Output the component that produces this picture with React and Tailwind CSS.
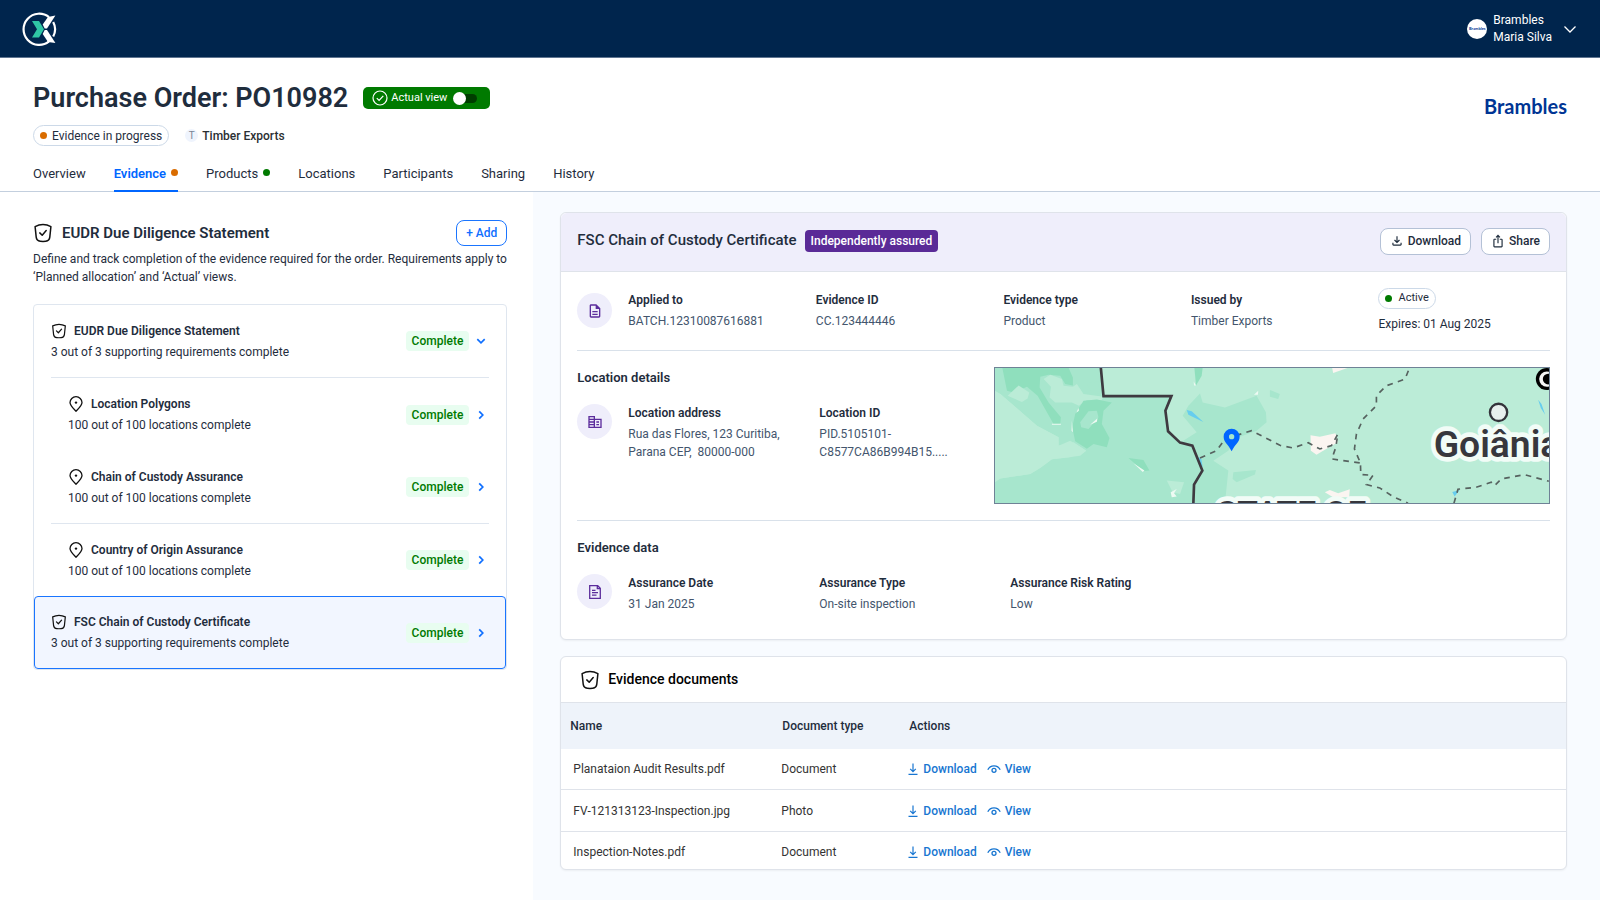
import React from 'react';
import { MdOutlineDescription, MdOutlineCorporateFare, MdOutlineFileDownload, MdOutlineIosShare } from 'react-icons/md';

const tabs = [
	{ name: 'Overview' },
	{ name: 'Evidence', dot: 'bg-[#d96c00]', active: true },
	{ name: 'Products', dot: 'bg-[#007a00]' },
	{ name: 'Locations' },
	{ name: 'Participants' },
	{ name: 'Sharing' },
	{ name: 'History' },
];

const requirements = [
	{ name: 'EUDR Due Diligence Statement', text: '3 out of 3 supporting requirements complete', open: true, line: true },
	{ name: 'Location Polygons', text: '100 out of 100 locations complete', nested: true },
	{ name: 'Chain of Custody Assurance', text: '100 out of 100 locations complete', nested: true, line: true },
	{ name: 'Country of Origin Assurance', text: '100 out of 100 locations complete', nested: true, line: true },
	{ name: 'FSC Chain of Custody Certificate', text: '3 out of 3 supporting requirements complete', selected: true },
];

const documents = [
	{ name: 'Planataion Audit Results.pdf', type: 'Document' },
	{ name: 'FV-121313123-Inspection.jpg', type: 'Photo' },
	{ name: 'Inspection-Notes.pdf', type: 'Document' },
];

function ShieldIcon({ className }) {
	return (
		<svg className={className} viewBox="0 0 20 20" fill="none" stroke="#111" strokeWidth="1.5" strokeLinecap="round" strokeLinejoin="round">
			<path d="M2.1 3.6C4.700 2.200 7.300 1.600 10 1.600s5.300.6 7.900 2l-1.100 10.600c-.3 2.500-1.600 3.800-4 4.100-1.900.2-3.700.2-5.600 0-2.400-.3-3.700-1.600-4-4.100z" />
			<path d="M6.800 9.900l2.400 2.300 4-4.600" />
		</svg>
	);
}

function PinIcon({ className }) {
	return (
		<svg className={className} viewBox="0 0 16 16" fill="none" stroke="#111" strokeWidth="1.3" strokeLinejoin="round">
			<path d="M8 15.2C5 12.2 2 9.6 2 6.6a6 5.9 0 0 1 12 0c0 3-3 5.600-6 8.600z" />
			<circle cx="8" cy="6.600" r="1.200" fill="#111" stroke="none" />
		</svg>
	);
}

function Chevron({ open }) {
	return (
		<svg className="size-4 shrink-0" viewBox="0 0 16 16" fill="none" stroke="#0f6fff" strokeWidth="1.700">
			<path d={open ? 'M4.300 6.200L8 9.800l3.700-3.600' : 'M6.200 4.300L9.800 8l-3.600 3.700'} />
		</svg>
	);
}

function Field({ label, children }) {
	return (
		<div>
			<dt className="font-semibold leading-[18px]">{label}</dt>
			<dd className="mt-[3px] leading-[18px] text-[#43556d]">{children}</dd>
		</div>
	);
}

function RoundIcon({ children }) {
	return (
		<div className="flex size-[35px] shrink-0 items-center justify-center rounded-full bg-[#efeefb] text-[#5c2d9c]">
			{children}
		</div>
	);
}

function Header() {
	return (
		<header className="flex h-[58px] items-center justify-between border-b border-[#5f7591] bg-[#00254d] pr-[23px] pl-[22px] text-white">
			<a href="#" aria-label="Home">
				<svg className="size-9" viewBox="0 0 36 36">
					<path d="M27 6.200A15.600 15.600 0 1 0 27 30.400M31.200 11a15.600 15.600 0 0 1 0 14.600" fill="none" stroke="#fff" strokeWidth="2.200" />
					<path d="M10 10h7l5 8.300-5 8.300h-7l5-8.300z" fill="#2fc6a5" />
					<path d="M20.700 13.500L26 6l7.400-1.500-8.400 13h-2.300z" fill="#fff" />
					<path d="M20.700 23.100L26 31l7.400 1-8.400-12.900h-2.300z" fill="#fff" />
				</svg>
			</a>
			<button className="flex items-center text-left text-xs">
				<span className="flex size-5 items-center justify-center rounded-full bg-white font-[Lato,sans-serif] text-[4px] font-bold text-[#003594]">
					Brambles
				</span>
				<span className="ml-[6px] leading-[17px]">
					Brambles
					<br />
					Maria Silva
				</span>
				<svg className="ml-[11px] h-4 w-[14px]" viewBox="0 0 14 16" fill="none" stroke="#fff" strokeWidth="1.300">
					<path d="M1.500 5.500L7 11l5.500-5.500" />
				</svg>
			</button>
		</header>
	);
}

function OrderHeader() {
	return (
		<div className="border-b border-[#c3cfde] px-[33px] pt-6">
			<div className="flex items-start justify-between">
				<div>
					<div className="flex items-center">
						<h1 className="text-[27px] leading-8 font-semibold">Purchase Order: PO10982</h1>
						<label className="ml-[15px] flex h-[22px] items-center rounded-[5px] bg-[#007a00] pr-[13px] pl-[9px] text-[11px] text-white">
							<svg className="size-4" viewBox="0 0 16 16" fill="none" stroke="#fff" strokeWidth="1.200">
								<circle cx="8" cy="8" r="7" />
								<path d="M4.800 8.200l2.300 2.300 4.200-4.700" />
							</svg>
							<span className="mr-[6px] ml-[3px]">Actual view</span>
							<input
								type="checkbox"
								role="switch"
								className="relative h-[9px] w-6 appearance-none rounded-full bg-[#003d00] before:absolute before:-top-[2px] before:left-0 before:size-[13px] before:rounded-full before:bg-white"
							/>
						</label>
					</div>
					<div className="mt-[11px] flex items-center text-xs">
						<span className="flex h-[21px] items-center gap-[5px] rounded-full border border-[#ccd9e8] px-[6px]">
							<span className="size-[7px] rounded-full bg-[#d96c00]" />
							Evidence in progress
						</span>
						<span className="ml-4 flex size-[13px] items-center justify-center rounded-full bg-[#eff4fd] text-[10px] text-[#7a8494]">T</span>
						<span className="ml-1 font-medium text-[#2b2f33]">Timber Exports</span>
					</div>
				</div>
				<div className="mt-2 font-[Lato,sans-serif] text-[20px] leading-8 font-bold text-[#003594]">Brambles</div>
			</div>
			<nav className="mt-[18px] -mb-px flex gap-7 text-[13px] leading-5">
				{tabs.map((tab) => (
					<a
						key={tab.name}
						href="#"
						className={
							tab.active
								? 'flex h-7 items-start gap-[5px] border-b-2 border-[#0066ff] font-semibold text-[#0066ff]'
								: 'flex h-7 items-start gap-[5px]'
						}
					>
						{tab.name}
						{tab.dot && <span className={`mt-[5px] size-[7px] rounded-full ${tab.dot}`} />}
					</a>
				))}
			</nav>
		</div>
	);
}

function Requirements() {
	return (
		<section className="w-1/3 shrink-0 pt-7 pr-[26px] pl-[33px]">
			<div className="flex items-center">
				<ShieldIcon className="size-5" />
				<h2 className="ml-[9px] text-[15px] font-semibold">EUDR Due Diligence Statement</h2>
				<button className="ml-auto h-[26px] rounded-lg border border-[#1a75ff] px-[9px] text-xs font-medium text-[#0f6fff]">+ Add</button>
			</div>
			<p className="mt-1 text-xs leading-[18px]">
				Define and track completion of the evidence required for the order. Requirements apply to ‘Planned allocation’ and ‘Actual’ views.
			</p>
			<ul className="mt-[18px] rounded border border-[#dfe6ef]">
				{requirements.map((item) => (
					<li key={item.name} className={item.selected ? '-mt-px rounded border border-[#1a75ff] bg-[#f2f6ff] px-4' : 'px-[17px]'}>
						<button
							className={`flex w-full items-center text-left text-xs leading-[18px] ${item.selected ? 'h-[71px]' : 'h-[73px]'} ${item.line ? 'border-b border-[#dfe6ef]' : ''} ${item.nested ? 'pl-[17px]' : ''}`}
						>
							<span className="flex-1">
								<span className="flex items-center gap-[7px] font-semibold">
									{item.nested ? <PinIcon className="size-4" /> : <ShieldIcon className="size-4" />}
									{item.name}
								</span>
								<span className="mt-[3px] block">{item.text}</span>
							</span>
							<span className="mr-1 rounded bg-[#e8fdf0] px-[6px] py-px font-medium text-[#007a00]">Complete</span>
							<Chevron open={item.open} />
						</button>
					</li>
				))}
			</ul>
		</section>
	);
}

function LocationMap() {
	return (
		<svg
			className="h-[137px] w-4/7 shrink-0 border border-[#6f8296] bg-[#bbecd7]"
			viewBox="44 51 1664 407"
			preserveAspectRatio="xMidYMid slice"
			role="img"
			aria-label="Map of the location"
		>
			{/* land cover */}
			<path
				d="M44 51H362L370 138H575L556 180L564 242L600 276L650 245L608 195L625 165L660 128L668 155L735 170L830 135L858 185L860 215L830 240L770 262L745 300L700 330L745 360L735 458H44V390L60 384L110 376L150 370L190 345L215 326L270 320L300 310L318 300L280 275L235 285V260L170 225L60 130L44 120Z"
				fill="#a7e6cd"
			/>
			<path d="M44 125L60 130L170 225L235 260V285L270 270L318 300L300 315L215 326L180 352L150 370L60 384L44 395Z" fill="#bbecd7" />
			<path d="M66 51H265L278 80V104L255 100L240 75L205 72L180 78L178 110L205 155L242 200L240 220H220L172 135L140 108L100 125L80 120Z" fill="#8fdfbd" />
			<path d="M190 85L210 72L245 85L250 105L278 108L290 100L310 130L370 138L365 148L320 148L296 165L275 155H225L208 140L212 108Z" fill="#bbecd7" />
			<path d="M318 97L355 92L358 128L335 126Z" fill="#a7e6cd" />
			<path d="M82 135L115 104L147 125L142 143L125 154Z" fill="#bbecd7" />
			<path d="M285 190L310 150L350 146L395 155L370 180L365 220L388 262L380 290L340 280L320 294L285 272L276 230Z" fill="#8fdfbd" />
			<path d="M300 215L325 182L350 180L355 200L325 235L303 230Z" fill="#a7e6cd" />
			<path d="M445 322L490 328L508 360L490 362Z" fill="#8fdfbd" />
			<path d="M643 51H668L665 75L648 104Z" fill="#8fdfbd" />
			<path d="M760 365L828 358L825 372L770 395L758 385Z" fill="#a7e6cd" />
			<path d="M870 118L900 130L895 145L870 138Z" fill="#a7e6cd" />
			<path d="M560 390L612 395L600 430L578 425Z" fill="#bbecd7" />
			<path d="M572 425L590 415L582 428L590 438L575 440ZM215 219H242V222H215ZM330 222L352 203L350 213ZM460 338L493 360L488 364ZM822 132L835 120L834 132ZM288 186L295 172L296 180ZM275 210L278 245L274 240ZM641 92L648 104L642 104Z" fill="#eefaf3" />
			{/* towns */}
			<path d="M992 254L1020 258L1067 248L1074 275L1030 300L1010 312L993 300ZM1035 425L1050 418L1075 428L1110 416L1108 440L1060 440ZM1057 51H1105L1060 67Z" fill="#fbf5f1" />
			{/* water */}
			<path d="M620 178L635 182L670 214L625 192ZM652 318L664 325L668 350L660 342ZM1676 147L1686 160L1697 192L1684 172ZM1418 424L1440 418L1425 438Z" fill="#66cdee" />
			{/* borders */}
			<path d="M362 51L370 136H574L556 180L564 242L600 276L637 285L667 360L642 402L640 458" fill="none" stroke="#3e3a40" strokeWidth="8" />
			<g fill="none" stroke="#56625f" strokeWidth="5" strokeDasharray="17 16">
				<path d="M660 322L710 300L735 265L815 240L900 284L940 292L985 276L1020 295L1055 285L1074 250L1068 290L1056 325L1142 337" />
				<path d="M1286 60L1276 85L1220 105L1190 135V165L1150 205L1130 250L1124 295L1142 337L1143 372L1180 374L1160 402L1200 412L1240 438L1285 458" />
				<path d="M1423 458L1435 416L1490 410L1535 395L1545 405L1565 385L1635 372L1708 392" />
			</g>
			{/* cities */}
			<circle cx="1557" cy="185" r="26" fill="#e8f0ee" stroke="#33333a" strokeWidth="7" />
			<circle cx="1702" cy="85" r="33" fill="#000" />
			<circle cx="1702" cy="85" r="23" fill="#f5f5f5" />
			<circle cx="1706" cy="85" r="16" fill="#000" />
			<g
				className="font-[Roboto,sans-serif] font-semibold"
				fill="#37373d"
				stroke="#f2fcf7"
				strokeWidth="28"
				strokeLinejoin="round"
				paintOrder="stroke"
			>
				<text x="1362" y="320" fontSize="112">Goiânia</text>
				<text x="710" y="522" fontSize="101">STATE OF</text>
			</g>
			<path d="M755 302C745 280 731 275 731 258a24 24 0 0 1 48 0C779 275 765 280 755 302Z" fill="#0066ff" />
			<circle cx="755" cy="258" r="8" fill="#a7e6cd" />
		</svg>
	);
}

function Certificate() {
	return (
		<article className="rounded-md border border-[#dfe3ea] bg-white text-xs shadow-xs">
			<div className="flex h-[59px] items-center rounded-t-md border-b border-[#dfe3ea] bg-[#efeefb] px-4 pb-[2px]">
				<h2 className="text-[15px] font-medium">FSC Chain of Custody Certificate</h2>
				<span className="ml-2 rounded bg-[#5a2a97] px-[6px] py-[2px] leading-[18px] font-medium text-white">Independently assured</span>
				<button className="ml-auto flex h-[27px] items-center gap-1 rounded-lg border border-[#b4c1d6] bg-white px-[9px] font-medium">
					<MdOutlineFileDownload className="size-[14px]" />
					Download
				</button>
				<button className="ml-[10px] flex h-[27px] items-center gap-1 rounded-lg border border-[#b4c1d6] bg-white px-[9px] font-medium">
					<MdOutlineIosShare className="size-[14px]" />
					Share
				</button>
			</div>
			<div className="px-4">
				<div className="flex items-center gap-4 border-b border-[#d9e1ea] pt-4 pb-[17px]">
					<RoundIcon>
						<MdOutlineDescription className="size-4" />
					</RoundIcon>
					<dl className="grid flex-1 grid-cols-5 items-center gap-4">
						<Field label="Applied to">BATCH.12310087616881</Field>
						<Field label="Evidence ID">CC.123444446</Field>
						<Field label="Evidence type">Product</Field>
						<Field label="Issued by">Timber Exports</Field>
						<div>
							<dt className="flex h-[21px] w-fit items-center gap-[6px] rounded-full border border-[#ccd9e8] px-[6px] text-[11px]">
								<span className="size-[7px] rounded-full bg-[#007a00]" />
								Active
							</dt>
							<dd className="mt-[6px] leading-[18px]">Expires: 01 Aug 2025</dd>
						</div>
					</dl>
				</div>
				<div className="flex border-b border-[#d9e1ea] py-4">
					<div className="flex-1">
						<h3 className="text-[13px] leading-[22px] font-semibold">Location details</h3>
						<div className="mt-[15px] flex gap-4">
							<RoundIcon>
								<MdOutlineCorporateFare className="size-4" />
							</RoundIcon>
							<dl className="grid flex-1 grid-cols-[191px_1fr]">
								<Field label="Location address">
									Rua das Flores, 123 Curitiba,
									<br />
									Parana CEP,&nbsp; 80000-000
								</Field>
								<Field label="Location ID">
									PID.5105101-
									<br />
									C8577CA86B994B15.....
								</Field>
							</dl>
						</div>
					</div>
					<LocationMap />
				</div>
				<div className="pt-4 pb-[26px]">
					<h3 className="text-[13px] leading-[22px] font-semibold">Evidence data</h3>
					<div className="mt-[15px] flex gap-4">
						<RoundIcon>
							<svg className="size-4" viewBox="0 0 16 16" fill="none" stroke="currentColor" strokeWidth="1.300">
								<path d="M2.700 1.700h8l2.600 2.600v10H2.700zM10.300 1.700v3h3M5 6.300h3.500M5 8.700h6M5 11.200h4.500" />
							</svg>
						</RoundIcon>
						<dl className="grid grid-cols-[191px_191px_191px]">
							<Field label="Assurance Date">31 Jan 2025</Field>
							<Field label="Assurance Type">On-site inspection</Field>
							<Field label="Assurance Risk Rating">Low</Field>
						</dl>
					</div>
				</div>
			</div>
		</article>
	);
}

function Documents() {
	return (
		<section className="mt-4 overflow-hidden rounded-md border border-[#dfe3ea] bg-white text-xs shadow-xs">
			<div className="flex h-[45px] items-center gap-2 pl-[19px] text-black">
				<ShieldIcon className="size-5" />
				<h2 className="text-[14px] font-medium">Evidence documents</h2>
			</div>
			<table className="w-full table-fixed text-left">
				<thead className="border-t border-[#dfe3ea] bg-[#eef3fa]">
					<tr className="h-[46px]">
						<th className="w-[211px] pl-[9px] font-medium">Name</th>
						<th className="w-[127px] pl-[10px] font-medium">Document type</th>
						<th className="pl-[10px] font-medium">Actions</th>
					</tr>
				</thead>
				<tbody className="divide-y divide-[#dfe3ea] text-[#333]">
					{documents.map((document) => (
						<tr key={document.name} className="h-[42px] first:h-[41px] last:h-[37px] last:*:pt-1">
							<td className="pl-3">{document.name}</td>
							<td className="pl-[9px]">{document.type}</td>
							<td className="pl-[9px]">
								<div className="flex items-center font-medium text-[#1876d1]">
									<a href="#" className="flex items-center gap-[5px]">
										<svg className="h-3 w-[10px]" viewBox="0 0 10 12" fill="none" stroke="currentColor" strokeWidth="1.200">
											<path d="M5 .5v8M2.200 5.800L5 8.600l2.800-2.800M.5 11.300h9" />
										</svg>
										Download
									</a>
									<a href="#" className="ml-[10px] flex items-center gap-1">
										<svg className="h-3 w-[14px]" viewBox="0 0 14 12" fill="none" stroke="currentColor" strokeWidth="1.300">
											<path d="M.8 6.800C2 4.200 4.300 2.800 7 2.800s5 1.400 6.200 4" />
											<circle cx="7" cy="7.300" r="2" />
										</svg>
										View
									</a>
								</div>
							</td>
						</tr>
					))}
				</tbody>
			</table>
		</section>
	);
}

export default function App() {
	return (
		<div className="flex min-h-screen flex-col bg-white font-[Roboto,sans-serif] text-[#1f2d3d]">
			<Header />
			<OrderHeader />
			<main className="flex flex-1">
				<Requirements />
				<div className="min-w-0 flex-1 bg-[#f8fbff] pt-5 pr-[33px] pb-5 pl-[27px]">
					<Certificate />
					<Documents />
				</div>
			</main>
		</div>
	);
}
